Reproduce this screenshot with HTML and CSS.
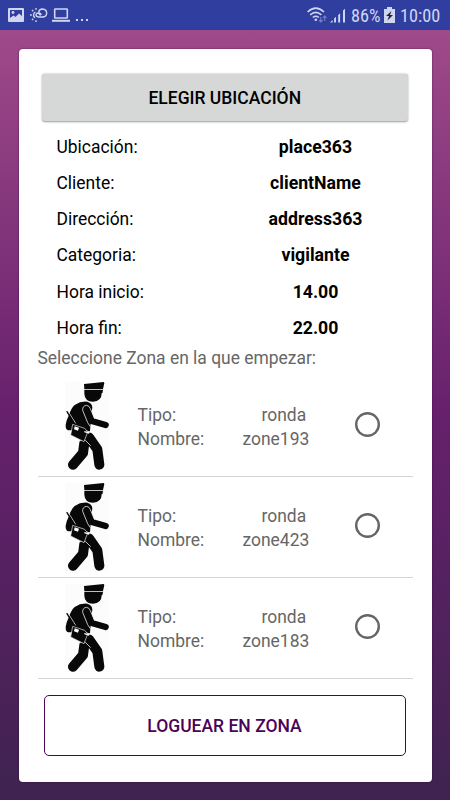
FILE: index.html
```html
<!DOCTYPE html>
<html lang="es">
<head>
    <meta charset="UTF-8">
    <meta name="viewport" content="width=device-width, initial-scale=1.0">
    <title>Ubicación</title>
    <link rel="stylesheet" href="styles.css">
</head>
<body>
    <!-- Iconos reutilizados -->
    <svg class="defs" width="0" height="0">
        <symbol id="vigilante" viewBox="45 33 132 264">
            <path d="M102 39 L161 33 L163 36 L159 54 L103 54 Z"/>
            <path d="M103 56 H160 L158 60 Q160 66 155 67 Q155 91 129 92 Q104 91 103 68 Z"/>
            <path d="M74 102 Q92 90 112 92 Q127 96 127 110 L124 130 L120 181 L84 184 L66 176 Q58 180 51 176 Q46 172 47 161 Q49 147 57 132 Q63 112 74 102 Z"/>
            <path class="limb" d="M111 114 L125 150 L167 162"/>
            <path class="leg" d="M103 216 L99 246 L69 281"/>
            <path class="leg" d="M117 199 L142 235 L148 281"/>
            <path class="gap" d="M98 118 Q97 104 110 103 Q118 104 121 113 L134 143 M98 118 L113 155 L121 167 M103 177 L119 183 M88 209 L106 208 L122 224"/>
            <path class="outline" d="M68 160 L104 172 L113 183 L102 212 L62 192 Z"/>
            <path class="gap" d="M53 119 L77 157"/>
            <path class="antenna" d="M51 122 L73 158"/>
            <path class="white" d="M74 166 L87 170 L84 179 L72 175 Z M103 180 L119 184 L117 188 L103 184 Z"/>
        </symbol>
    </svg>

    <div class="status-bar">
        <div class="status-left">
            <svg class="icon-image" width="16" height="14" viewBox="0 0 16 14">
                <path fill="#d0d5f0" fill-rule="evenodd" d="M1 0H15Q16 0 16 1V13Q16 14 15 14H1Q0 14 0 13V1Q0 0 1 0Z M2 2V10L5.5 7.5L7.5 9L11 5.5L14 8V2Z"/>
                <circle cx="5" cy="4.5" r="1.4" fill="#d0d5f0"/>
            </svg>
            <svg class="icon-weather" width="18" height="14" viewBox="0 0 18 14" fill="none" stroke="#d0d5f0" stroke-width="1.4">
                <path d="M5.5 4.2A3 3 0 0 0 5 9.6M6 0V1.8M2 2L3.3 3.2M0 7H1.8M2 12L3.2 10.8M6 12.2V14"/>
                <path d="M10.5 7.5Q8.5 6 8.8 3.8Q9.5 1 12.5 1Q16.5 1.2 16.7 5Q16.5 9 12.5 9H8.5Q6 8.8 6 6.8Q6.5 4.8 9 5Q11 5.2 11.2 7"/>
            </svg>
            <svg class="icon-laptop" width="18" height="14" viewBox="0 0 18 14" fill="none" stroke="#d0d5f0">
                <rect x="2.7" y="1" width="12.6" height="9" rx=".5" stroke-width="1.6"/>
                <path d="M0 12.8H18" stroke-width="2"/>
            </svg>
            <span class="more"><i></i><i></i><i></i></span>
        </div>
        <div class="status-right">
            <svg class="icon-wifi" width="20" height="16" viewBox="0 0 20 16" fill="none" stroke="#d0d5f0" stroke-width="1.6">
                <path d="M.6 5Q8.8 -2.6 17 5M3.2 7.8Q8.8 3 14.4 7.8M5.8 10.5Q8.8 8 11.8 10.5"/>
                <circle cx="8.8" cy="12.8" r="1.3" fill="#d0d5f0" stroke="none"/>
                <path stroke="#7680c8" stroke-width="1.1" d="M13.8 10V15M12 13.2L13.8 15L15.6 13.2M17.7 14V9M15.9 10.8L17.7 9L19.5 10.8"/>
            </svg>
            <svg class="icon-signal" width="16" height="15" viewBox="0 0 16 15" fill="#d0d5f0">
                <path d="M0 14.5L2.6 12V14.5Z M4.1 10.5L6 8.8V14.5H4.1Z M8.2 7L10.1 5.2V14.5H8.2Z M13 2.5L15 .8V14.5H13Z"/>
            </svg>
            <span class="battery-text">86%</span>
            <svg class="icon-battery" width="11" height="16" viewBox="0 0 11 16">
                <path fill="#d0d5f0" d="M3 0H8V2H11V16H0V2H3Z"/>
                <path fill="#20263c" d="M7.5 4L2 9H5L3.5 13.5L9 8H6Z"/>
            </svg>
            <span class="clock">10:00</span>
        </div>
    </div>

    <div class="screen">
        <div class="card">
            <button class="btn-location">ELEGIR UBICACIÓN</button>

            <div class="details">
                <div class="detail"><span>Ubicación:</span><b>place363</b></div>
                <div class="detail"><span>Cliente:</span><b>clientName</b></div>
                <div class="detail"><span>Dirección:</span><b>address363</b></div>
                <div class="detail"><span>Categoria:</span><b>vigilante</b></div>
                <div class="detail"><span>Hora inicio:</span><b>14.00</b></div>
                <div class="detail"><span>Hora fin:</span><b>22.00</b></div>
            </div>

            <div class="hint">Seleccione Zona en la que empezar:</div>

            <div class="zones">
                <div class="zone">
                    <svg class="guard"><use href="#vigilante"/></svg>
                    <div class="labels"><span>Tipo:</span><span>Nombre:</span></div>
                    <div class="values"><span class="type">ronda</span><span>zone193</span></div>
                    <span class="radio"></span>
                </div>
                <div class="zone">
                    <svg class="guard"><use href="#vigilante"/></svg>
                    <div class="labels"><span>Tipo:</span><span>Nombre:</span></div>
                    <div class="values"><span class="type">ronda</span><span>zone423</span></div>
                    <span class="radio"></span>
                </div>
                <div class="zone">
                    <svg class="guard"><use href="#vigilante"/></svg>
                    <div class="labels"><span>Tipo:</span><span>Nombre:</span></div>
                    <div class="values"><span class="type">ronda</span><span>zone183</span></div>
                    <span class="radio"></span>
                </div>
            </div>

            <button class="btn-login">LOGUEAR EN ZONA</button>
        </div>
    </div>
</body>
</html>
```
FILE: styles.css
```css
* {
    box-sizing: border-box;
}

body {
    margin: 0;
    height: 800px;
    overflow: hidden;
    display: flex;
    flex-direction: column;
    font-family: Roboto, sans-serif;
    font-size: 17.45px;
    color: #000;
}

.defs {
    position: absolute;
}

/* Barra de estado */
.status-bar {
    height: 30px;
    padding: 0 10px 0 8px;
    background-color: #303f9f;
    display: flex;
    justify-content: space-between;
    align-items: center;
    color: #d0d5f0;
}

.status-left, .status-right {
    display: flex;
    align-items: center;
}

.icon-weather {
    margin-left: 6px;
}

.icon-laptop {
    margin-left: 4px;
}

.more {
    display: flex;
    gap: 3px;
    margin: 10px 0 0 6px;
}

.more i {
    width: 2px;
    height: 2px;
    background-color: #d0d5f0;
}

.icon-signal {
    margin-left: 3px;
}

.battery-text, .clock {
    font-family: "Roboto Condensed", Roboto, sans-serif;
    font-size: 18.2px;
    line-height: 30px;
    padding-top: 1px;
    white-space: nowrap;
}

.battery-text {
    width: 30px;
    margin-left: 5px;
}

.icon-battery {
    margin-left: 3px;
}

.clock {
    width: 40px;
    margin-left: 5px;
}

/* Tarjeta */
.screen {
    flex: 1;
    padding: 18.5px 18.5px 0 18.5px;
    background: linear-gradient(#9f4a8a, #66206c 50%, #3f2350);
}

.card {
    height: 733px;
    padding: 25.5px 19px 0;
    background-color: #fff;
    border-radius: 4px;
    box-shadow: 0 0 2px rgba(40, 0, 60, 0.7);
    display: flex;
    flex-direction: column;
}

button {
    font-family: inherit;
    font-size: 17.5px;
    font-weight: 500;
    padding: 0;
}

.btn-location {
    height: 47px;
    flex-shrink: 0;
    margin: 0 5px 0 4.5px;
    background-color: #d6d7d7;
    color: #000;
    border: 0;
    border-radius: 3px;
    box-shadow: 0 0.5px 2px rgba(0, 0, 0, 0.4);
}

.details {
    padding: 7.8px 0 0 19px;
}

.detail {
    height: 36.2px;
    display: grid;
    grid-template-columns: 165px 188px;
    align-items: center;
}

.detail b {
    font-size: 17.7px;
    text-align: center;
}

.hint {
    height: 24px;
    line-height: 24px;
    color: #666;
}

.zones {
    padding-top: 5.5px;
}

.zone {
    height: 101.2px;
    width: 375px;
    padding-left: 27px;
    border-bottom: 1px solid #d4d4d4;
    display: flex;
    align-items: center;
    color: #666;
}

.guard {
    width: 44px;
    height: 88px;
    background-color: #fcfcfc;
    fill: #080808;
}

.limb, .leg, .antenna {
    fill: none;
    stroke: #080808;
    stroke-linecap: round;
    stroke-linejoin: round;
}

.limb {
    stroke-width: 19;
}

.leg {
    stroke-width: 30;
}

.antenna {
    stroke-width: 4;
}

.gap {
    fill: none;
    stroke: #eee;
    stroke-width: 2.4;
}

.outline {
    stroke: #eee;
    stroke-width: 2;
}

.white {
    fill: #fff;
}

.labels, .values {
    display: flex;
    flex-direction: column;
    line-height: 24px;
    padding-top: 2px;
}

.labels {
    margin-left: 29px;
    width: 105px;
}

.values {
    width: 70px;
}

.values .type {
    padding-left: 19px;
}

/* El trazo necesita más de 2px, por eso se dibuja con sombra interior */
.radio {
    width: 25px;
    height: 25px;
    margin: -2px 0 0 42px;
    border-radius: 50%;
    box-shadow: inset 0 0 0 2.4px #666;
}

.btn-login {
    height: 61px;
    flex-shrink: 0;
    margin: 16.5px 7px 0 6px;
    padding-top: 1px;
    background-color: #fff;
    color: #4b0358;
    border: 1px solid #4b0358;
    border-radius: 5px;
}
```
